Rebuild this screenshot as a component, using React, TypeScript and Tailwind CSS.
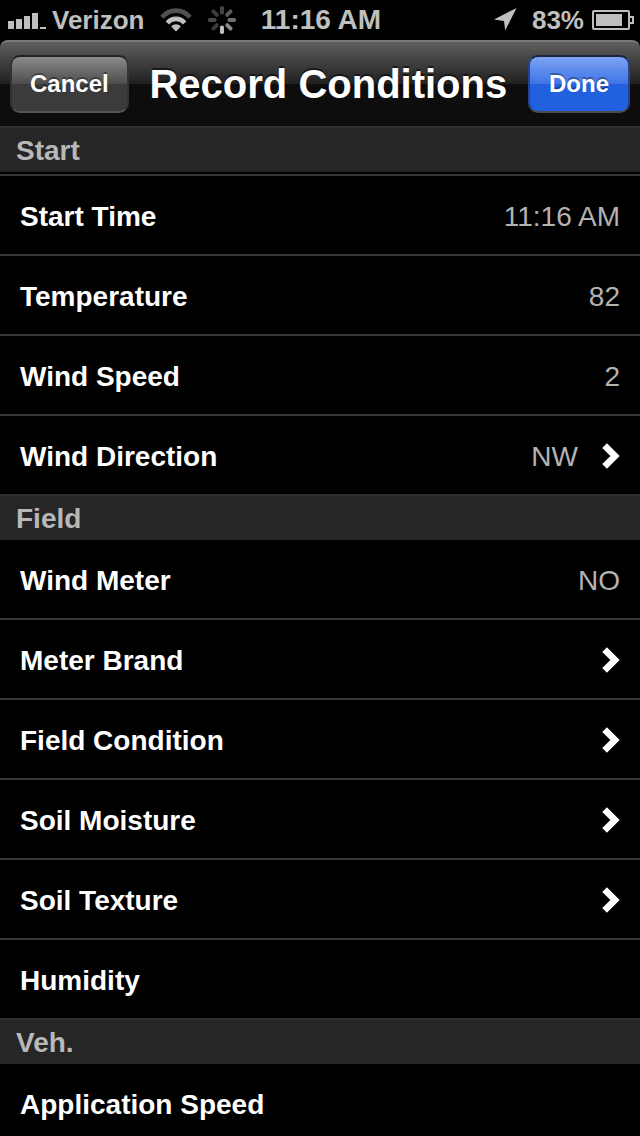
import React, { useState } from "react";

type RowKind = "text" | "toggle" | "link";

interface RowData {
  id: string;
  label: string;
  kind: RowKind;
  value?: string;
}

interface SectionData {
  title: string;
  rows: RowData[];
}

const sections: SectionData[] = [
  {
    title: "Start",
    rows: [
      { id: "start-time", label: "Start Time", kind: "text", value: "11:16 AM" },
      { id: "temperature", label: "Temperature", kind: "text", value: "82" },
      { id: "wind-speed", label: "Wind Speed", kind: "text", value: "2" },
      { id: "wind-direction", label: "Wind Direction", kind: "link", value: "NW" },
    ],
  },
  {
    title: "Field",
    rows: [
      { id: "wind-meter", label: "Wind Meter", kind: "toggle" },
      { id: "meter-brand", label: "Meter Brand", kind: "link" },
      { id: "field-condition", label: "Field Condition", kind: "link" },
      { id: "soil-moisture", label: "Soil Moisture", kind: "link" },
      { id: "soil-texture", label: "Soil Texture", kind: "link" },
      { id: "humidity", label: "Humidity", kind: "text" },
    ],
  },
  {
    title: "Veh.",
    rows: [{ id: "application-speed", label: "Application Speed", kind: "text" }],
  },
];

// clockwise from the top
const spokes = ["#444444", "#5a5a5a", "#707070", "#8a8a8a", "#bfbfbf", "#3a3a3a", "#484848", "#3c3c3c"];

const SignalIcon = () => (
  <svg width="38" height="18" viewBox="0 0 38 18" fill="#bfbfbf" aria-hidden="true">
    <rect x="0" y="10" width="6" height="8" />
    <rect x="8" y="8" width="6" height="10" />
    <rect x="16" y="5" width="6" height="13" />
    <rect x="24" y="2" width="6" height="16" />
    <rect x="32" y="16" width="6" height="2" />
  </svg>
);

const WifiIcon = () => (
  <svg width="32" height="24" viewBox="0 0 32 24" fill="none" aria-hidden="true">
    <path d="M2 9.2C9.6 0.4 22.4 0.4 30 9.2" stroke="#505050" strokeWidth="4.8" />
    <path d="M7.4 15C12 9.4 20 9.4 24.6 15" stroke="#bfbfbf" strokeWidth="4.8" />
    <path d="M11.2 18.6C13.8 15.6 18.2 15.6 20.8 18.6L16 23.4z" fill="#bfbfbf" />
  </svg>
);

const Spinner = () => (
  <svg width="28" height="28" viewBox="0 0 28 28" aria-hidden="true">
    {spokes.map((color, index) => (
      <rect
        key={index}
        x="12"
        y="0"
        width="4"
        height="8.5"
        rx="1.8"
        fill={color}
        transform={`rotate(${index * 45} 14 14)`}
      />
    ))}
  </svg>
);

const LocationIcon = () => (
  <svg width="24" height="24" viewBox="0 0 24 24" fill="#bfbfbf" aria-hidden="true">
    <path d="M22.5 0L11.2 22.5L10 13L0 11.4z" />
  </svg>
);

const BatteryIcon = () => (
  <svg width="42" height="20" viewBox="0 0 42 20" aria-hidden="true">
    <rect x="1" y="1" width="36" height="18" rx="1" fill="none" stroke="#bfbfbf" strokeWidth="2" />
    <path d="M38 7h3v6h-3" fill="none" stroke="#bfbfbf" strokeWidth="2" />
    <rect x="4" y="4" width="26" height="12" fill="#bfbfbf" />
  </svg>
);

const Chevron = () => (
  <svg width="18" height="26" viewBox="0 0 18 26" fill="none" aria-hidden="true">
    <path d="M2.6 2.6L13 13L2.6 23.4" stroke="white" strokeWidth="6.6" />
  </svg>
);

const StatusBar = () => (
  <div className="grid h-10 shrink-0 grid-cols-[1fr_auto_1fr] items-center pl-2 pr-1.5 text-[26px] leading-10 font-bold text-[#bfbfbf]">
    <div className="flex items-center gap-1.5">
      <SignalIcon />
      <span>Verizon</span>
      <span className="ml-2.5">
        <WifiIcon />
      </span>
      <span className="ml-2.5">
        <Spinner />
      </span>
    </div>
    <span className="text-[28px]">11:16 AM</span>
    <div className="flex items-center justify-end gap-2">
      <LocationIcon />
      <span className="ml-1.5">83%</span>
      <BatteryIcon />
    </div>
  </div>
);

const NavBar = () => (
  <header className="flex h-[86px] shrink-0 items-center justify-between rounded-t-lg border-t-2 border-[#7a7a7a] bg-linear-[180deg,#5e5e5e_0%,#1f1f1f_50%,#0d0d0d_50%,#0d0d0d_100%] px-2.5">
    <button
      type="button"
      className="h-[58px] rounded-[10px] border-2 border-t-[#222] border-x-[#333] border-b-[#555] bg-linear-[180deg,#8b8b8b_0%,#4c4c4c_50%,#3b3b3b_50%,#3b3b3b_100%] px-[18px] text-2xl font-bold text-white text-shadow-[0_-2px_0_#0005]"
    >
      Cancel
    </button>
    <h1 className="text-[40px] leading-none font-bold text-white text-shadow-[0_-2px_0_#0008]">
      Record Conditions
    </h1>
    <button
      type="button"
      className="h-[58px] rounded-[10px] border-2 border-t-[#1b2440] border-x-[#26438c] border-b-[#4b4b4f] bg-linear-[180deg,#7ea3f4_0%,#3d74e6_50%,#2160df_50%,#2160df_100%] px-[19px] text-2xl font-bold text-white text-shadow-[0_-2px_0_#0005]"
    >
      Done
    </button>
  </header>
);

const rowClass = "flex h-[78px] w-full items-center pt-1 px-5 text-[28px] text-white";

const Row: React.FC<{ row: RowData }> = ({ row }) => {
  const [value, setValue] = useState<string>(row.value ?? "");
  const [isOn, setIsOn] = useState<boolean>(false);

  if (row.kind === "text") {
    return (
      <div className={rowClass}>
        <label htmlFor={row.id} className="font-bold whitespace-nowrap">
          {row.label}
        </label>
        <input
          id={row.id}
          type="text"
          value={value}
          onChange={(e) => setValue(e.target.value)}
          className="min-w-0 flex-1 bg-transparent text-right text-[#b3b3b3] outline-none"
        />
      </div>
    );
  }

  return (
    <button
      type="button"
      aria-pressed={row.kind === "toggle" ? isOn : undefined}
      onClick={() => row.kind === "toggle" && setIsOn(!isOn)}
      className={rowClass}
    >
      <span className="flex-1 text-left font-bold">{row.label}</span>
      <span className="text-[#b3b3b3]">
        {row.kind === "toggle" ? (isOn ? "YES" : "NO") : value}
      </span>
      {row.kind === "link" && (
        <span className="ml-6 pb-0.5">
          <Chevron />
        </span>
      )}
    </button>
  );
};

const App: React.FC = () => {
  return (
    <div className="flex h-screen flex-col overflow-hidden bg-black font-['Liberation_Sans',Arial,sans-serif]">
      <StatusBar />
      <NavBar />
      <main className="min-h-0 flex-1 overflow-y-auto [scrollbar-width:none]">
        {sections.map((section, index) => (
          <section key={section.title} className="border-t-2 border-[#303030]">
            <h2 className="h-11 bg-[#262626] px-4 text-[28px] leading-[46px] font-bold text-[#b8b8b8]">
              {section.title}
            </h2>
            <ul
              className={`divide-y-2 divide-[#363636] ${
                index === 0 ? "mt-0.5 border-t-2 border-[#363636]" : ""
              }`}
            >
              {section.rows.map((row) => (
                <li key={row.id}>
                  <Row row={row} />
                </li>
              ))}
            </ul>
          </section>
        ))}
      </main>
    </div>
  );
};

export default App;
